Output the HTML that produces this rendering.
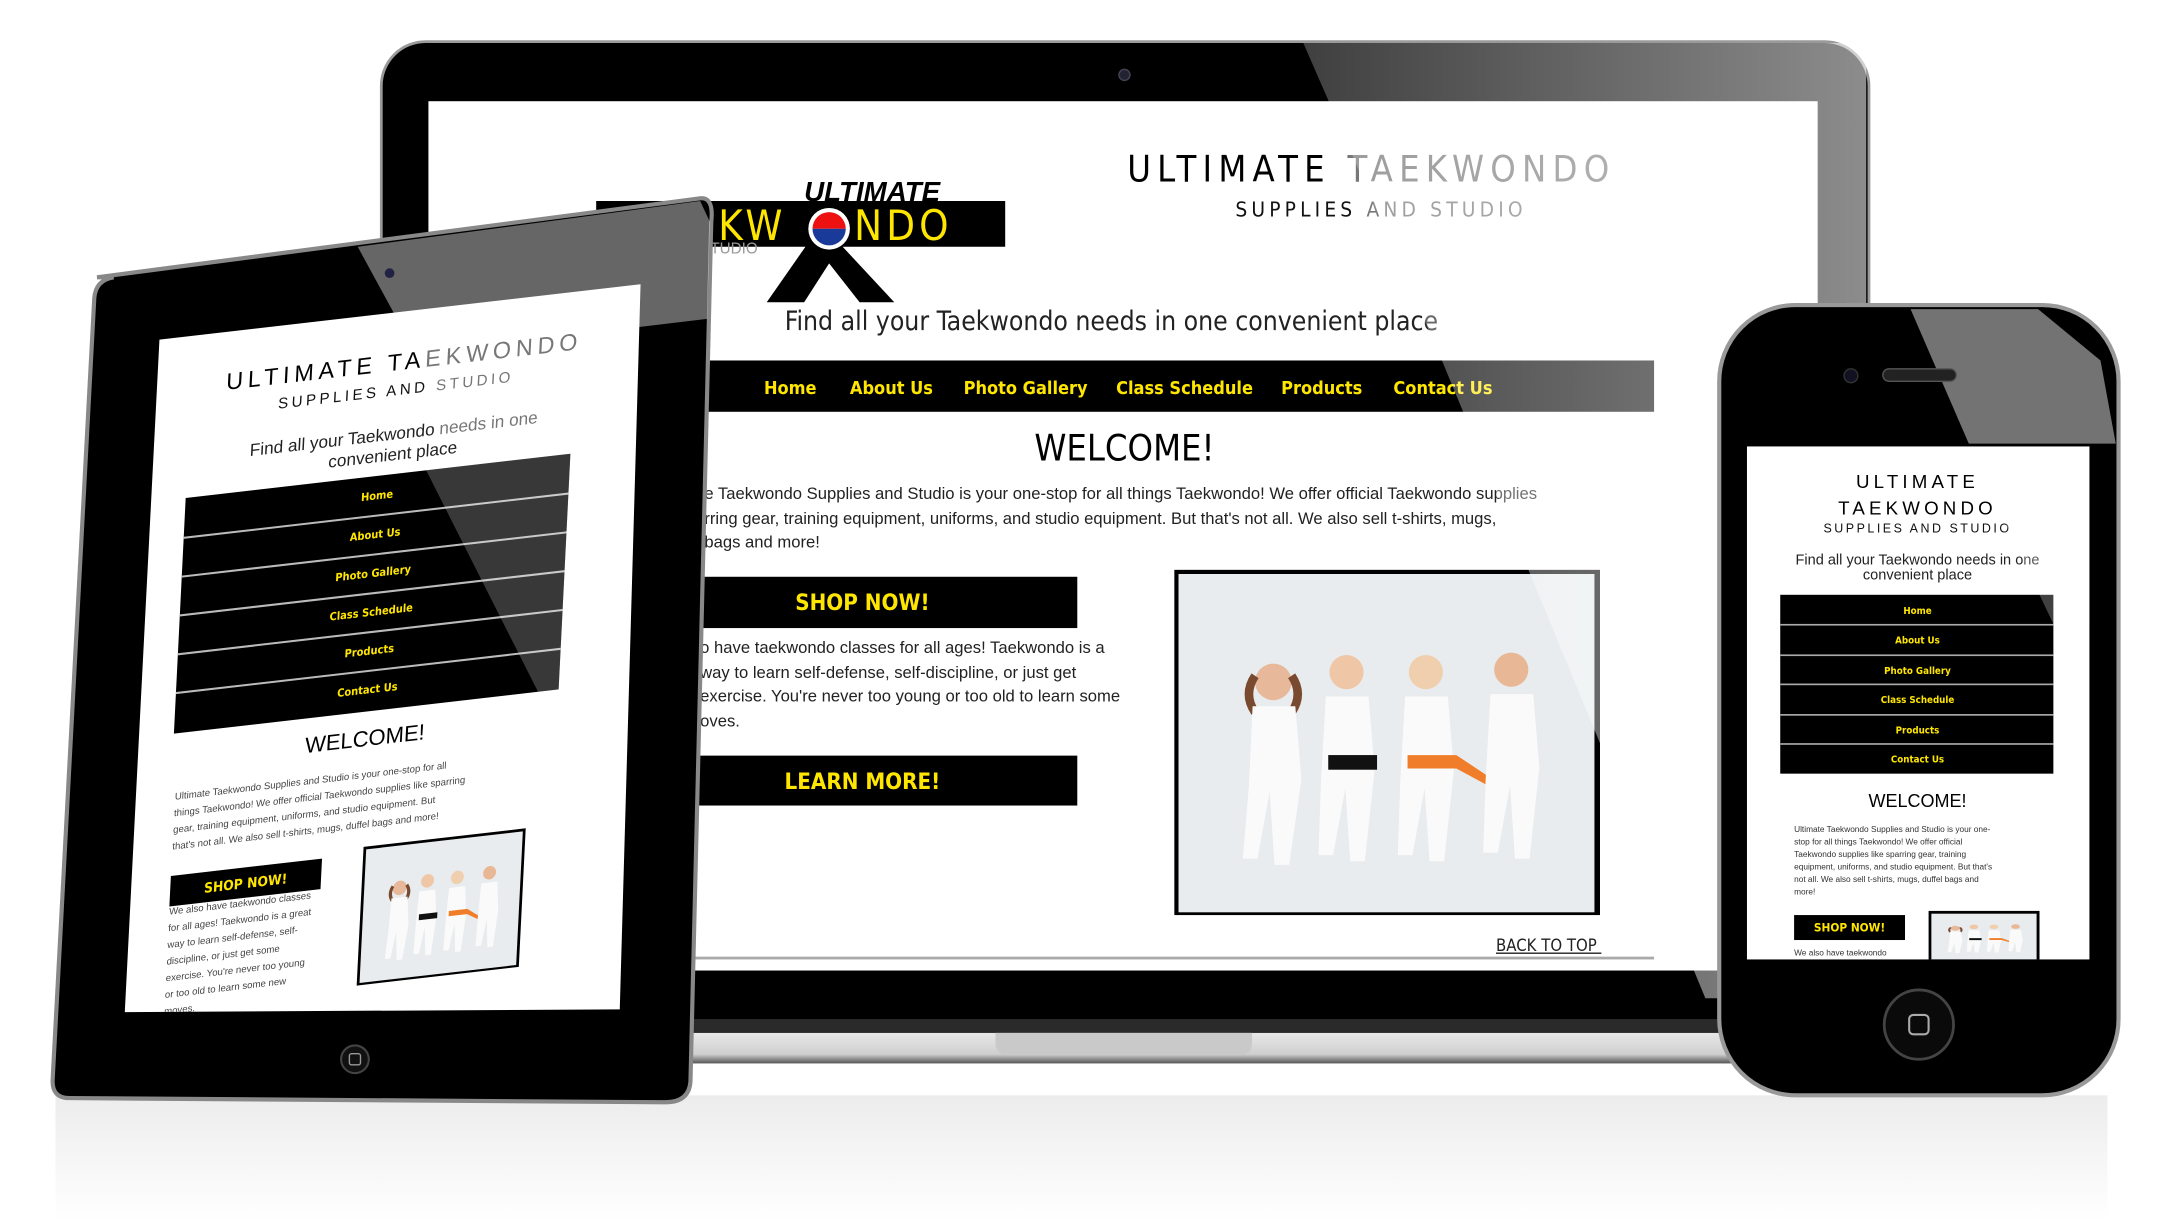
<!DOCTYPE html>
<html><head><meta charset="utf-8"><style>
html,body{margin:0;padding:0;background:#fff;overflow:hidden}
svg{display:block}
text{font-family:"Liberation Sans","DejaVu Sans",sans-serif}
.n{font-family:"DejaVu Sans","Liberation Sans",sans-serif;font-stretch:condensed;font-weight:bold;fill:#ffe600}
.c{font-family:"DejaVu Sans","Liberation Sans",sans-serif;font-stretch:condensed}
</style></head><body>
<svg width="2174" height="1228" viewBox="0 0 1568 885.7" xmlns="http://www.w3.org/2000/svg">
<defs>
<linearGradient id="refl" x1="0" y1="0" x2="0" y2="1"><stop offset="0" stop-color="#e4e4e4"/><stop offset="1" stop-color="#fff"/></linearGradient>
<linearGradient id="base" x1="0" y1="0" x2="0" y2="1"><stop offset="0" stop-color="#e8e8e8"/><stop offset="0.7" stop-color="#cfcfcf"/><stop offset="1" stop-color="#555"/></linearGradient>
<linearGradient id="gl" x1="0" y1="0" x2="1" y2="0"><stop offset="0" stop-color="#fff" stop-opacity="0.25"/><stop offset="1" stop-color="#fff" stop-opacity="0.55"/></linearGradient>
<g id="kids">
<rect x="0" y="0" width="300" height="244" fill="#e8ecee"/>
<g transform="translate(20,25) scale(0.88)">
<circle cx="55" cy="60" r="15" fill="#e8b89a"/><path d="M40 55 q-10 15 0 30 M70 55 q10 15 0 30" stroke="#7a4a30" stroke-width="7" fill="none"/>
<path d="M38 80 h35 l5 60 l-10 70 h-12 l-4-60 l-10 55 h-12 l5-60z" fill="#fafafa"/>
<circle cx="115" cy="52" r="14" fill="#efc6a6"/><path d="M98 72 h35 l5 60 l-8 75 h-12 l-4-60 l-10 55 h-12 l2-60z" fill="#fafafa"/>
<rect x="100" y="120" width="40" height="12" fill="#111"/>
<circle cx="180" cy="52" r="14" fill="#f0cfae"/><path d="M163 72 h35 l5 60 l-8 75 h-12 l-4-60 l-10 55 h-12 l2-60z" fill="#fafafa"/>
<path d="M165 120 h40 l30 20 l-4 5 l-26-14 h-40z" fill="#f07d2a"/>
<circle cx="250" cy="50" r="14" fill="#e8b896"/><path d="M233 70 h35 l5 60 l-8 75 h-12 l-4-60 l-10 55 h-12 l2-60z" fill="#fafafa"/>
</g></g>
</defs>

<rect x="40" y="790" width="1480" height="90" fill="url(#refl)" opacity="0.7"/>

<!-- LAPTOP -->
<rect x="275" y="30" width="1073" height="725" rx="32" fill="#000" stroke="#9a9a9a" stroke-width="2"/>
<circle cx="811" cy="54" r="4" fill="#223" stroke="#445" stroke-width="1"/>
<rect x="309" y="73" width="1002" height="627" fill="#fff"/>
<g>
<polygon points="430,145 725,145 725,178 430,178" fill="#000"/>
<text x="518" y="173" font-size="30" fill="#ffe600" letter-spacing="3" class="c">KW</text>
<text x="616" y="173" font-size="30" fill="#ffe600" letter-spacing="3" class="c">NDO</text>
<polygon points="583,175 605,175 645,218 620,218 598,190 580,218 553,218" fill="#000"/>
<circle cx="598" cy="165" r="15" fill="#fff"/><path d="M586 165 a12 12 0 0 1 24 0z" fill="#e11"/><path d="M586 165 a12 12 0 0 0 24 0z" fill="#1a3a9a"/>
<text x="580" y="145" font-size="20" font-weight="bold" font-style="italic" fill="#000">ULTIMATE</text>
<text x="505" y="183" font-size="11" fill="#999">STUDIO</text>
<text x="813" y="131" font-size="26" letter-spacing="4.5" fill="#000" class="c">ULTIMATE <tspan fill="#777">TAEKWONDO</tspan></text>
<text x="891" y="156" font-size="15" letter-spacing="3" fill="#111" class="c">SUPPLIES <tspan fill="#777">AND STUDIO</tspan></text>
<text x="566" y="238" font-size="19" fill="#222" class="c">Find all your Taekwondo needs in one convenient place</text>
<rect x="500" y="260" width="693" height="37" fill="#000"/>
<text y="284" font-size="13" class="n"><tspan x="551">Home</tspan><tspan x="613">About Us</tspan><tspan x="695">Photo Gallery</tspan><tspan x="805">Class Schedule</tspan><tspan x="924">Products</tspan><tspan x="1005">Contact Us</tspan></text>
<text x="811" y="332" font-size="26" text-anchor="middle" fill="#000" class="c">WELCOME!</text>
<g font-size="12" fill="#222" class="c"><text x="508" y="360">e Taekwondo Supplies and Studio is your one-stop for all things Taekwondo! We offer official Taekwondo supplies</text>
<text x="508" y="378">rring gear, training equipment, uniforms, and studio equipment. But that's not all. We also sell t-shirts, mugs,</text>
<text x="508" y="395">bags and more!</text>
<text x="505" y="471">o have taekwondo classes for all ages! Taekwondo is a</text>
<text x="505" y="489">way to learn self-defense, self-discipline, or just get</text>
<text x="505" y="506">exercise. You're never too young or too old to learn some</text>
<text x="505" y="524">oves.</text></g>
<rect x="500" y="416" width="277" height="37" fill="#000"/>
<text x="622" y="440" font-size="16" text-anchor="middle" class="n">SHOP NOW!</text>
<rect x="500" y="545" width="277" height="36" fill="#000"/>
<text x="622" y="569" font-size="16" text-anchor="middle" class="n">LEARN MORE!</text>
<rect x="847" y="411" width="307" height="249" fill="#000"/>
<use href="#kids" transform="translate(850,414)"/>
<text x="1079" y="686" font-size="12" fill="#222" class="c">BACK TO TOP</text>
<rect x="1079" y="687" width="76" height="1" fill="#222"/>
<rect x="500" y="690" width="693" height="2" fill="#aaa"/>
</g>
<polygon points="940,31 1346,31 1346,720 1230,720 1040,260" fill="url(#gl)"/>
<rect x="300" y="735" width="1040" height="10" fill="#2a2a2a"/>
<rect x="295" y="745" width="1050" height="22" fill="url(#base)"/>
<path d="M718 745 h185 v8 a8 8 0 0 1 -8 8 h-169 a8 8 0 0 1 -8 -8z" fill="#c9c9c9"/>

<!-- TABLET -->
<path d="M70 200 L505 143 Q515 142 513 160 L498 780 Q497 795 480 795 L50 792 Q37 792 38 778 L68 215 Q69 202 82 200Z" fill="#000" stroke="#888" stroke-width="3"/>
<polygon points="258,178 505,145 512,160 510,230 300,255" fill="#fff" opacity="0.4"/>
<circle cx="281" cy="197" r="3.5" fill="#224"/>
<circle cx="256" cy="764" r="10" fill="#111" stroke="#444" stroke-width="1.5"/><rect x="252" y="760" width="8" height="8" rx="1.5" fill="none" stroke="#999"/>
<polygon points="115,245 462,205 447,728 90,730" fill="#fff"/>
<clipPath id="tc"><polygon points="115,245 462,205 447,728 90,730"/></clipPath>
<g clip-path="url(#tc)">
<g transform="matrix(0.991,-0.114,-0.05,1.0,115,245)">
<text x="180" y="42" font-size="17" letter-spacing="3.5" text-anchor="middle" fill="#000">ULTIMATE TA<tspan fill="#777">EKWONDO</tspan></text>
<text x="175" y="60" font-size="11" letter-spacing="2.5" text-anchor="middle" fill="#111">SUPPLIES AND <tspan fill="#777">STUDIO</tspan></text>
<text x="175" y="92" font-size="12.5" text-anchor="middle" fill="#222">Find all your Taekwondo <tspan fill="#777">needs in one</tspan></text>
<text x="175" y="107" font-size="12.5" text-anchor="middle" fill="#222">convenient place</text>
<rect x="25" y="117" width="280" height="170" fill="#000"/>
<g fill="#bbb"><rect x="25" y="145" width="280" height="1.5"/><rect x="25" y="173" width="280" height="1.5"/><rect x="25" y="201" width="280" height="1.5"/><rect x="25" y="229" width="280" height="1.5"/><rect x="25" y="257" width="280" height="1.5"/></g>
<text font-size="8" text-anchor="middle" class="n"><tspan x="165" y="134">Home</tspan><tspan x="165" y="162">About Us</tspan><tspan x="165" y="190">Photo Gallery</tspan><tspan x="165" y="218">Class Schedule</tspan><tspan x="165" y="246">Products</tspan><tspan x="165" y="274">Contact Us</tspan></text>
<polygon points="200,117 305,117 305,287 290,287" fill="#fff" opacity="0.22"/>
<text x="165" y="312" font-size="16" text-anchor="middle" fill="#000">WELCOME!</text>
<g font-size="7" fill="#444"><text x="28" y="335">Ultimate Taekwondo Supplies and Studio is your one-stop for all</text>
<text x="28" y="347">things Taekwondo! We offer official Taekwondo supplies like sparring</text>
<text x="28" y="359">gear, training equipment, uniforms, and studio equipment. But</text>
<text x="28" y="371">that's not all. We also sell t-shirts, mugs, duffel bags and more!</text>
<text x="28" y="418">We also have taekwondo classes</text><text x="28" y="430">for all ages! Taekwondo is a great</text><text x="28" y="442">way to learn self-defense, self-</text><text x="28" y="454">discipline, or just get some</text><text x="28" y="466">exercise. You're never too young</text><text x="28" y="478">or too old to learn some new</text><text x="28" y="490">moves.</text></g>
<rect x="28" y="390" width="110" height="22" fill="#000"/>
<text x="83" y="405" font-size="10" text-anchor="middle" class="n">SHOP NOW!</text>
<rect x="168" y="385" width="118" height="100" fill="#000"/>
<use href="#kids" transform="translate(170,387) scale(0.38,0.395)"/>
</g></g>

<!-- PHONE -->
<rect x="1240" y="220" width="288" height="570" rx="55" fill="#000" stroke="#999" stroke-width="3"/>
<polygon points="1378,223 1470,223 1515,260 1526,320 1420,320" fill="#fff" opacity="0.45"/>
<circle cx="1335" cy="271" r="5" fill="#112" stroke="#333"/>
<rect x="1358" y="266" width="53" height="9" rx="4.5" fill="#222" stroke="#555"/>
<rect x="1260" y="322" width="247" height="370" fill="#fff"/>
<g>
<text x="1383" y="352" font-size="13.5" letter-spacing="3" text-anchor="middle" fill="#000">ULTIMATE</text>
<text x="1383" y="371" font-size="13.5" letter-spacing="3" text-anchor="middle" fill="#000">TAEKWONDO</text>
<text x="1383" y="384" font-size="9" letter-spacing="1.8" text-anchor="middle" fill="#111">SUPPLIES AND STUDIO</text>
<text x="1383" y="407" font-size="10.5" text-anchor="middle" fill="#222">Find all your Taekwondo needs in one</text>
<text x="1383" y="418" font-size="10.5" text-anchor="middle" fill="#222">convenient place</text>
<rect x="1284" y="429" width="197" height="129" fill="#000"/>
<g fill="#aaa"><rect x="1284" y="450" width="197" height="1.2"/><rect x="1284" y="472" width="197" height="1.2"/><rect x="1284" y="493" width="197" height="1.2"/><rect x="1284" y="515" width="197" height="1.2"/><rect x="1284" y="536" width="197" height="1.2"/></g>
<text font-size="7" text-anchor="middle" class="n"><tspan x="1383" y="443">Home</tspan><tspan x="1383" y="464">About Us</tspan><tspan x="1383" y="486">Photo Gallery</tspan><tspan x="1383" y="507">Class Schedule</tspan><tspan x="1383" y="529">Products</tspan><tspan x="1383" y="550">Contact Us</tspan></text>
<text x="1383" y="582" font-size="13" text-anchor="middle" fill="#000">WELCOME!</text>
<g font-size="6" fill="#333"><text x="1294" y="600">Ultimate Taekwondo Supplies and Studio is your one-</text><text x="1294" y="609">stop for all things Taekwondo! We offer official</text><text x="1294" y="618">Taekwondo supplies like sparring gear, training</text><text x="1294" y="627">equipment, uniforms, and studio equipment. But that's</text><text x="1294" y="636">not all. We also sell t-shirts, mugs, duffel bags and</text><text x="1294" y="645">more!</text><text x="1294" y="689">We also have taekwondo</text></g>
<rect x="1294" y="660" width="80" height="18" fill="#000"/>
<text x="1334" y="672" font-size="8.5" text-anchor="middle" class="n">SHOP NOW!</text>
<rect x="1391" y="657" width="80" height="35" fill="#000"/>
<use href="#kids" transform="translate(1393,659) scale(0.253,0.135)"/>
</g>
<polygon points="1420,322 1507,322 1507,450 1481,450" fill="#fff" opacity="0.25"/>
<circle cx="1384" cy="739" r="25" fill="#0a0a0a" stroke="#444" stroke-width="2"/>
<rect x="1377" y="732" width="14" height="14" rx="3" fill="none" stroke="#aaa" stroke-width="1.5"/>
</svg>
</body></html>
